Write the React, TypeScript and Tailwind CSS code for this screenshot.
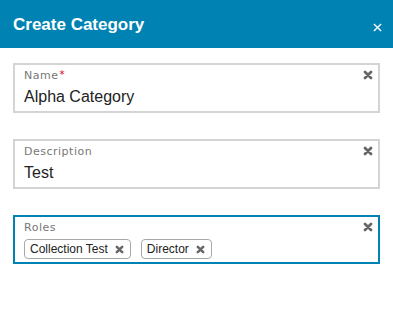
import React from "react";

const HeavyX = ({ size = 9, className = "" }: { size?: number; className?: string }) => (
  <svg width={size} height={size} viewBox="0 0 10 10" className={className}>
    <path d="M2 2L8 8M8 2L2 8" stroke="currentColor" strokeWidth="2.8" strokeLinecap="round" />
  </svg>
);

const Field = ({
  label,
  required,
  focused,
  children,
}: {
  label: string;
  required?: boolean;
  focused?: boolean;
  children: React.ReactNode;
}) => (
  <div
    className={`relative border-2 ${focused ? "border-[#0083b3]" : "border-[#d4d4d4]"} px-[9px] pt-[4px] pb-[4px]`}
  >
    <div className="flex items-start text-[11px] leading-[14px] text-[#777] tracking-[0.5px]" style={{ fontFamily: '"DejaVu Sans", sans-serif' }}>
      {label}
      {required && <span className="text-[#e0001b] text-[10px] leading-[10px] ml-[1px] mt-[1px]">*</span>}
    </div>
    <div className="mt-[4px]">{children}</div>
    <div className="absolute right-[5px] top-[5px] text-[#666]">
      <HeavyX size={10} />
    </div>
  </div>
);

const Chip = ({ text }: { text: string }) => (
  <div className="flex items-center h-[20px] border border-[#a8a8a8] rounded-[4px] pl-[5px] pr-[6px] gap-[7px] text-[12px] text-[#222]">
    <span>{text}</span>
    <HeavyX size={9} className="text-[#666]" />
  </div>
);

export default function App() {
  return (
    <div className="w-[393px] h-[313px] bg-white" style={{ fontFamily: '"Liberation Sans", Arial, sans-serif' }}>
      <div className="h-[48px] bg-[#0083b3] flex items-center justify-between pl-[13px] pr-[11px]">
        <span className="text-white font-bold text-[17px] leading-[20px] mt-[1px]">Create Category</span>
        <svg width="9" height="9" viewBox="0 0 10 10" className="mt-[6px]">
          <path d="M1 1L9 9M9 1L1 9" stroke="white" strokeWidth="1.5" />
        </svg>
      </div>
      <div className="px-[13px] pt-[15px] flex flex-col gap-[26px]">
        <Field label="Name" required>
          <div className="text-[16px] leading-[20px] text-[#222]">Alpha Category</div>
        </Field>
        <Field label="Description">
          <div className="text-[16px] leading-[20px] text-[#222]">Test</div>
        </Field>
        <Field label="Roles" focused>
          <div className="flex gap-[10px] pb-[0px] -mb-[1px]">
            <Chip text="Collection Test" />
            <Chip text="Director" />
          </div>
        </Field>
      </div>
    </div>
  );
}
